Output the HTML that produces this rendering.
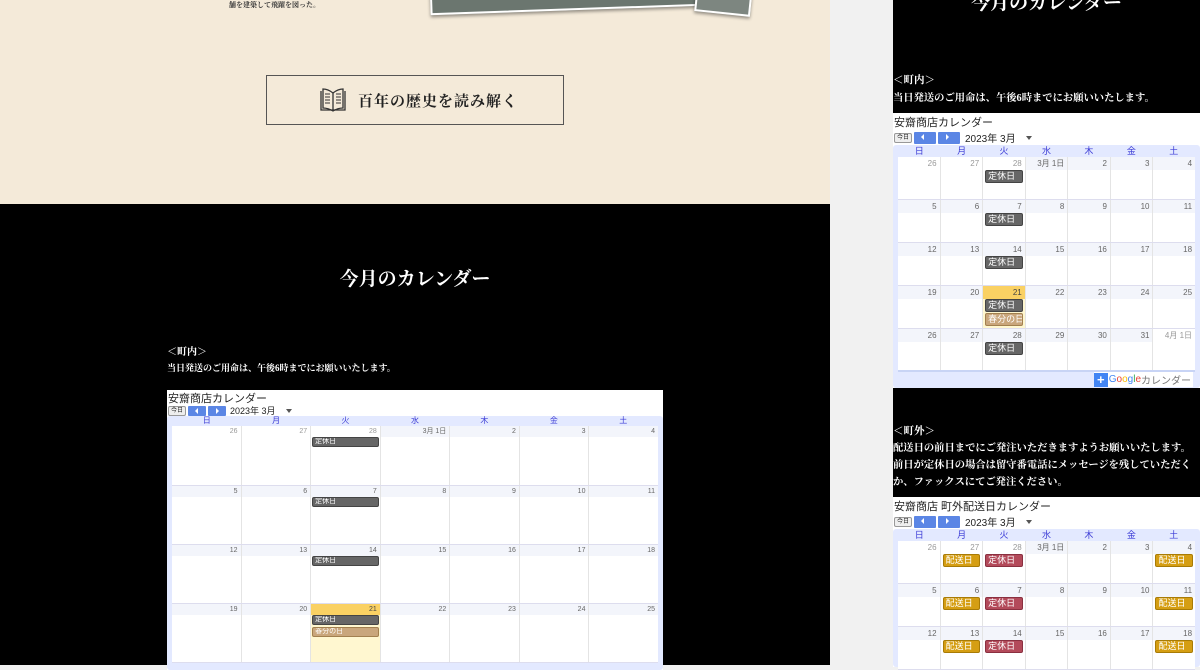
<!DOCTYPE html>
<html><head><meta charset="utf-8">
<style>
*{margin:0;padding:0;box-sizing:border-box}
body{width:1200px;height:665px;overflow:hidden;background:#f1f1f1;position:relative;font-family:"Liberation Sans","Noto Sans CJK JP",sans-serif}
.a{position:absolute}
.serif{font-family:"Liberation Serif","Noto Serif CJK SC",serif;font-weight:bold;color:#fff}
.cal{position:absolute;background:#fff}
.cal .t{position:absolute;left:1px;font-size:11px;color:#222;white-space:nowrap}
.nav{position:absolute;left:1px;display:flex;align-items:center;gap:2px;font-size:10px;color:#222}
.nav .td{width:18px;height:10px;border:1px solid #999;border-radius:2px;background:#eee;font-size:6px;text-align:center;line-height:8px}
.nav .ar{width:18px;height:10px;background:#5b86e5;border-radius:1px;position:relative}
.nav .ar.l:after{content:"";position:absolute;left:7px;top:2px;border:3px solid transparent;border-right:3px solid #fff;border-left:0}
.nav .ar.r:after{content:"";position:absolute;left:8px;top:2px;border:3px solid transparent;border-left:3px solid #fff;border-right:0}
.nav .dd{margin-left:8px;border:3px solid transparent;border-top:4px solid #555;margin-top:3px}
.g{position:absolute;left:0;right:0;background:#e3e9ff;border-radius:3px}
.hd{position:absolute;display:flex;color:#3b3bd6;font-size:8px}
.hd div{flex:1;text-align:center}
.wk{position:absolute;display:flex;background:#fff;border-bottom:1px solid #dde}
.wk>div{flex:1;border-left:1px solid #e4e4e4;position:relative}
.wk>div:first-child{border-left:0}
.wk>div b{display:block;font-weight:normal;text-align:right;color:#666;padding-right:3px;background:#f3f5fb}
.wk>div b.o{color:#999;background:#fff}
.wk>div.tdy{background:#fff7d0}
.wk>div.tdy b{background:#fad163;color:#444}
.e{position:absolute;color:#fff;border-radius:2px;padding-left:2px;white-space:nowrap;font-style:normal;overflow:hidden}
.eg{background:#666;border:1px solid #444}
.et{background:#c9a67c;border:1px solid #a2804f}
.ey{background:#d59e13;border:1px solid #a87b06}
.er{background:#b34a5a;border:1px solid #8a3040}
.L .wk>div b{font-size:7px;height:11px;line-height:11px}
.L .e{font-size:7px;height:10px;line-height:8px;left:1px;right:1px}
.R .wk>div b{font-size:8px;height:13px;line-height:13px}
.R .e{font-size:9px;height:13px;line-height:11px;left:2px;right:2px}
</style></head><body>

<div class="a" style="left:0;top:0;width:830px;height:204px;background:#f4ead9"></div>
<div class="a" style="left:229px;top:0;font-size:7px;font-family:'Liberation Serif','Noto Serif CJK SC',serif;font-weight:bold;color:#333">舗を建築して飛躍を図った。</div>
<div class="a" style="left:430px;top:-22px;width:300px;height:32px;background:#6b766f;border:2px solid #fff;transform:rotate(-2deg);box-shadow:0 2px 3px rgba(0,0,0,.4)"></div>
<div class="a" style="left:696px;top:-24px;width:56px;height:38px;background:#7d8680;border:2px solid #fff;transform:rotate(6deg);box-shadow:0 2px 3px rgba(0,0,0,.4)"></div>
<div class="a" style="left:266px;top:75px;width:298px;height:50px;border:1px solid #555"></div>
<svg class="a" style="left:318px;top:84px" width="30" height="30" viewBox="0 0 30 30" fill="none" stroke="#333" stroke-width="1.3"><path d="M3 7v19h24V7"/><path d="M15 9v17"/><path d="M5 5q5 0 10 4q5-4 10-4v19q-5 0-10 3q-5-3-10-3z"/><path d="M7 10h5M7 13h5M7 16h5M7 19h5M18 10h5M18 13h5M18 16h5M18 19h5" stroke-width="1"/></svg>
<div class="a serif" style="left:358px;top:90px;font-size:15px;color:#222;letter-spacing:1px">百年の歴史を読み解く</div>

<div class="a" style="left:0;top:204px;width:830px;height:461px;background:#000"></div>
<div class="a serif" style="left:0;width:830px;top:264px;text-align:center;font-size:19px">今月のカレンダー</div>
<div class="a serif" style="left:167px;top:343px;font-size:10px">＜町内＞</div>
<div class="a serif" style="left:167px;top:361px;font-size:9px">当日発送のご用命は、午後6時までにお願いいたします。</div>

<div class="cal L" style="left:167px;top:390px;width:496px;height:280px">
 <div class="t" style="top:0">安齋商店カレンダー</div>
 <div class="nav" style="top:14px"><div class="td">今日</div><div class="ar l"></div><div class="ar r"></div><span style="margin-left:2px;font-size:9px">2023年 3月</span><div class="dd"></div></div>
 <div class="g" style="top:26px;bottom:0"></div>
 <div class="hd" style="left:5px;right:5px;top:26px;height:10px;line-height:10px"><div>日</div><div>月</div><div>火</div><div>水</div><div>木</div><div>金</div><div>土</div></div>
 <div class="wk" style="left:5px;right:5px;top:36px;height:60px"><div><b class="o">26</b></div><div><b class="o">27</b></div><div><b class="o">28</b><i class="e eg" style="top:11px">定休日</i></div><div><b>3月 1日</b></div><div><b>2</b></div><div><b>3</b></div><div><b>4</b></div></div>
 <div class="wk" style="left:5px;right:5px;top:96px;height:59px"><div><b>5</b></div><div><b>6</b></div><div><b>7</b><i class="e eg" style="top:11px">定休日</i></div><div><b>8</b></div><div><b>9</b></div><div><b>10</b></div><div><b>11</b></div></div>
 <div class="wk" style="left:5px;right:5px;top:155px;height:59px"><div><b>12</b></div><div><b>13</b></div><div><b>14</b><i class="e eg" style="top:11px">定休日</i></div><div><b>15</b></div><div><b>16</b></div><div><b>17</b></div><div><b>18</b></div></div>
 <div class="wk" style="left:5px;right:5px;top:214px;height:59px"><div><b>19</b></div><div><b>20</b></div><div class="tdy"><b>21</b><i class="e eg" style="top:11px">定休日</i><i class="e et" style="top:23px">春分の日</i></div><div><b>22</b></div><div><b>23</b></div><div><b>24</b></div><div><b>25</b></div></div>
</div>

<div class="a" style="left:893px;top:0;width:307px;height:113px;background:#000"></div>
<div class="a serif" style="left:893px;width:307px;top:-12px;text-align:center;font-size:19px">今月のカレンダー</div>
<div class="a serif" style="left:893px;top:72px;font-size:10.5px">＜町内＞</div>
<div class="a serif" style="left:893px;top:89px;font-size:10.3px">当日発送のご用命は、午後6時までにお願いいたします。</div>

<div class="cal R" style="left:893px;top:113px;width:307px;height:275px">
 <div class="t" style="top:1px">安齋商店カレンダー</div>
 <div class="nav" style="top:17px"><div class="td">今日</div><div class="ar l" style="width:22px;height:12px"></div><div class="ar r" style="width:22px;height:12px"></div><span style="margin-left:3px">2023年 3月</span><div class="dd"></div></div>
 <div class="g" style="top:32px;bottom:0"></div>
 <div class="hd" style="left:5px;right:5px;top:33px;height:11px;line-height:11px;font-size:9px"><div>日</div><div>月</div><div>火</div><div>水</div><div>木</div><div>金</div><div>土</div></div>
 <div class="wk" style="left:5px;right:5px;top:44px;height:43px"><div><b class="o">26</b></div><div><b class="o">27</b></div><div><b class="o">28</b><i class="e eg" style="top:13px">定休日</i></div><div><b>3月 1日</b></div><div><b>2</b></div><div><b>3</b></div><div><b>4</b></div></div>
 <div class="wk" style="left:5px;right:5px;top:87px;height:43px"><div><b>5</b></div><div><b>6</b></div><div><b>7</b><i class="e eg" style="top:13px">定休日</i></div><div><b>8</b></div><div><b>9</b></div><div><b>10</b></div><div><b>11</b></div></div>
 <div class="wk" style="left:5px;right:5px;top:130px;height:43px"><div><b>12</b></div><div><b>13</b></div><div><b>14</b><i class="e eg" style="top:13px">定休日</i></div><div><b>15</b></div><div><b>16</b></div><div><b>17</b></div><div><b>18</b></div></div>
 <div class="wk" style="left:5px;right:5px;top:173px;height:43px"><div><b>19</b></div><div><b>20</b></div><div class="tdy"><b>21</b><i class="e eg" style="top:13px">定休日</i><i class="e et" style="top:27px">春分の日</i></div><div><b>22</b></div><div><b>23</b></div><div><b>24</b></div><div><b>25</b></div></div>
 <div class="wk" style="left:5px;right:5px;top:216px;height:43px;border-bottom:2px solid #c8d4f5"><div><b>26</b></div><div><b>27</b></div><div><b>28</b><i class="e eg" style="top:13px">定休日</i></div><div><b>29</b></div><div><b>30</b></div><div><b>31</b></div><div><b class="o">4月 1日</b></div></div>
 <div class="a" style="right:7px;top:259px;height:15px;background:#fff;display:flex;align-items:center;font-size:10px;color:#777;padding-right:2px"><span style="width:14px;height:14px;background:#4285f4;color:#fff;font-weight:bold;text-align:center;line-height:14px;font-size:13px;margin-right:1px">+</span><span style="color:#4285f4">G</span><span style="color:#ea4335">o</span><span style="color:#fbbc05">o</span><span style="color:#4285f4">g</span><span style="color:#34a853">l</span><span style="color:#ea4335">e</span>カレンダー</div>
</div>

<div class="a" style="left:893px;top:388px;width:307px;height:109px;background:#000"></div>
<div class="a serif" style="left:893px;top:423px;font-size:10.5px">＜町外＞</div>
<div class="a serif" style="left:893px;top:440px;font-size:10.3px;line-height:17px;width:310px;white-space:nowrap">配送日の前日までにご発注いただきますようお願いいたします。<br>前日が定休日の場合は留守番電話にメッセージを残していただく<br>か、ファックスにてご発注ください。</div>

<div class="cal R" style="left:893px;top:497px;width:307px;height:170px">
 <div class="t" style="top:1px">安齋商店 町外配送日カレンダー</div>
 <div class="nav" style="top:17px"><div class="td">今日</div><div class="ar l" style="width:22px;height:12px"></div><div class="ar r" style="width:22px;height:12px"></div><span style="margin-left:3px">2023年 3月</span><div class="dd"></div></div>
 <div class="g" style="top:32px;bottom:0"></div>
 <div class="hd" style="left:5px;right:5px;top:33px;height:11px;line-height:11px;font-size:9px"><div>日</div><div>月</div><div>火</div><div>水</div><div>木</div><div>金</div><div>土</div></div>
 <div class="wk" style="left:5px;right:5px;top:44px;height:43px"><div><b class="o">26</b></div><div><b class="o">27</b><i class="e ey" style="top:13px">配送日</i></div><div><b class="o">28</b><i class="e er" style="top:13px">定休日</i></div><div><b>3月 1日</b></div><div><b>2</b></div><div><b>3</b></div><div><b>4</b><i class="e ey" style="top:13px">配送日</i></div></div>
 <div class="wk" style="left:5px;right:5px;top:87px;height:43px"><div><b>5</b></div><div><b>6</b><i class="e ey" style="top:13px">配送日</i></div><div><b>7</b><i class="e er" style="top:13px">定休日</i></div><div><b>8</b></div><div><b>9</b></div><div><b>10</b></div><div><b>11</b><i class="e ey" style="top:13px">配送日</i></div></div>
 <div class="wk" style="left:5px;right:5px;top:130px;height:43px"><div><b>12</b></div><div><b>13</b><i class="e ey" style="top:13px">配送日</i></div><div><b>14</b><i class="e er" style="top:13px">定休日</i></div><div><b>15</b></div><div><b>16</b></div><div><b>17</b></div><div><b>18</b><i class="e ey" style="top:13px">配送日</i></div></div>
</div>
</body></html>
